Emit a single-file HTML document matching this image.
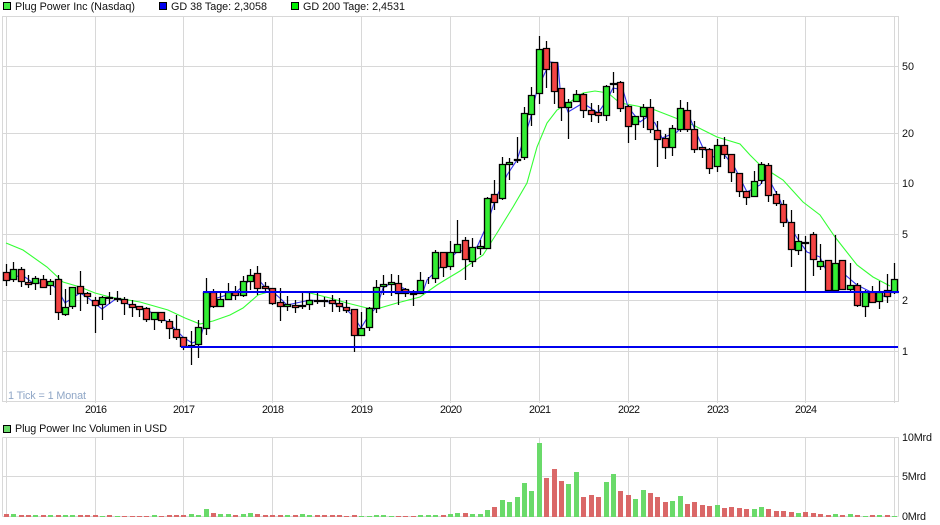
<!DOCTYPE html>
<html><head><meta charset="utf-8"><style>
html,body{margin:0;padding:0;background:#fff;width:940px;height:525px;overflow:hidden}
svg{display:block}
text{font-family:"Liberation Sans",sans-serif;font-size:10.8px;fill:#111}
</style></head><body>
<svg width="940" height="525" viewBox="0 0 940 525" xmlns="http://www.w3.org/2000/svg">
<rect width="940" height="525" fill="#fff"/>
<!-- grid -->
<path fill="none" stroke="#d8d8d8" stroke-width="1" d="M2.5 16.5H898.5V401.5H2.5ZM6.5 16.5V403M95.5 16.5V403M183.5 16.5V403M272.5 16.5V403M361.5 16.5V403M450.5 16.5V403M539.5 16.5V403M628.5 16.5V403M717.5 16.5V403M805.5 16.5V403M894.5 16.5V403M2.5 66.5H898.5M2.5 133.5H898.5M2.5 183.5H898.5M2.5 234.5H898.5M2.5 300.5H898.5M2.5 351.5H898.5"/>
<path fill="none" stroke="#d8d8d8" stroke-width="1" d="M2.5 437.5H898.5V516.5M2.5 516.5V437.5M6.5 437.5V516.5M95.5 437.5V516.5M183.5 437.5V516.5M272.5 437.5V516.5M361.5 437.5V516.5M450.5 437.5V516.5M539.5 437.5V516.5M628.5 437.5V516.5M717.5 437.5V516.5M805.5 437.5V516.5M894.5 437.5V516.5M2.5 476.5H898.5M2.5 516.5H898.5"/>
<!-- MA 200 -->
<polyline fill="none" stroke="#33ff33" stroke-width="1.1" points="6,243 23,250 47,267 63,282 80,287 95,293 110,297 140,302 168,310 185,318 200,324 213,321 230,315 243,308 258,295 268,292 297,292 310,293 330,298 347,303 367,308 380,308 397,303 420,297 437,285 445,280 460,271 483,255 497,233 513,207 527,183 537,147 547,123 557,110 570,102 583,93 595,91 608,93 620,103 637,106 655,110 673,117 693,125 703,130 717,137 740,144 750,155 760,165 772,173 783,180 803,202 820,215 835,237 857,265 873,277 890,286"/>
<!-- MA 38 -->
<polyline fill="none" stroke="#3333ee" stroke-width="1.1" points="6,275 25,277 33,283 50,283 58,290 65,303 80,293 87,297 102,309 117,298 133,307 147,310 168,322 183,337 192,343 200,340 208,310 217,298 227,295 235,293 250,280 257,278 265,287 273,292 282,300 287,305 310,300 330,302 345,308 354,317 361,328 369,315 377,307 383,288 391,283 403,288 413,293 423,292 427,280 435,272 457,252 477,247 487,225 495,200 507,175 517,160 530,120 537,90 550,62 558,63 560,88 568,112 583,103 598,113 607,100 613,88 623,90 628,107 640,122 647,117 655,123 662,138 677,132 690,118 695,130 703,148 713,157 723,153 735,168 747,192 760,185 768,173 772,185 780,200 788,222 797,238 807,252 820,257 825,268 843,273 857,285 873,293 887,297 893,290"/>
<!-- wicks -->
<path fill="none" stroke="#000" stroke-width="1.25" d="M6.5 264V286M13.5 262V282M21.5 267V287M28.5 275V288M35.5 276V290M43.5 275V288M50.5 279V295M58.5 275V320M65.5 289V316M72.5 287V309M80.5 271V311M87.5 292V304M95.5 297V333M102.5 296V320M109.5 292V304M117.5 291V302M124.5 297V315M132.5 300V317M139.5 306V317M146.5 307V322M154.5 312V330M161.5 312V323M169.5 319V339M176.5 315V340M183.5 337V350M191.5 331V365M198.5 320V358M206.5 278V335M213.5 289V308M220.5 292V307M228.5 283V300M235.5 286V300M243.5 276V297M250.5 269V290M257.5 266V295M265.5 282V291M272.5 288V305M280.5 288V321M287.5 296V311M295.5 300V313M302.5 292V309M309.5 293V310M317.5 292V304M324.5 297V307M332.5 295V312M339.5 298V312M346.5 300V313M354.5 309V352M361.5 312V335M369.5 307V331M376.5 280V313M383.5 275V295M391.5 274V296M398.5 275V305M405.5 288V297M413.5 290V306M420.5 272V294M428.5 277V284M435.5 250V283M443.5 252V277M450.5 241V270M457.5 220V253M465.5 237V280M472.5 238V267M480.5 240V255M487.5 197V248M494.5 180V210M502.5 157V200M509.5 158V180M517.5 137V163M524.5 107V160M531.5 87V126M539.5 36V104M546.5 41V88M554.5 62V104M561.5 88V121M568.5 99V139M576.5 90V101M583.5 93V118M591.5 103V122M598.5 105V123M606.5 85V121M613.5 72V93M620.5 81V112M628.5 105V143M635.5 116V140M643.5 104V128M650.5 99V133M657.5 121V167M665.5 134V159M672.5 125V156M680.5 100V132M687.5 102V132M694.5 121V153M702.5 147V158M709.5 148V174M717.5 139V172M724.5 137V159M731.5 154V182M739.5 173V197M746.5 191V205M754.5 171V196M761.5 162V184M768.5 163V202M776.5 191V206M783.5 200V227M791.5 210V267M798.5 234V255M805.5 236V292M813.5 232V276M820.5 244V270M828.5 260V290M835.5 235V290M842.5 260V290M850.5 263V293M857.5 283V307M865.5 290V317M872.5 286V303M879.5 281V309M887.5 274V303M894.5 263V294"/>
<!-- red bodies -->
<path fill="#f44444" stroke="#000" stroke-width="1.35" d="M3.5 272.5h6V280.5h-6zM18.5 269.5h6V281.5h-6zM25.5 282.5h6V284.5h-6zM40.5 279.5h6V287.5h-6zM55.5 279.5h6V312.5h-6zM77.5 286.5h6V293.5h-6zM84.5 293.5h6V296.5h-6zM92.5 300.5h6V305.5h-6zM106.5 297.5h6V298.5h-6zM114.5 298.5h6V299.5h-6zM121.5 299.5h6V303.5h-6zM129.5 304.5h6V307.5h-6zM136.5 306.5h6V309.5h-6zM143.5 308.5h6V319.5h-6zM158.5 312.5h6V320.5h-6zM166.5 321.5h6V328.5h-6zM173.5 329.5h6V337.5h-6zM180.5 337.5h6V346.5h-6zM188.5 345.5h6V346.5h-6zM210.5 292.5h6V306.5h-6zM232.5 292.5h6V295.5h-6zM254.5 273.5h6V288.5h-6zM262.5 286.5h6V288.5h-6zM269.5 288.5h6V303.5h-6zM277.5 302.5h6V306.5h-6zM292.5 305.5h6V307.5h-6zM299.5 305.5h6V306.5h-6zM314.5 300.5h6V301.5h-6zM321.5 300.5h6V301.5h-6zM329.5 300.5h6V303.5h-6zM336.5 303.5h6V306.5h-6zM343.5 307.5h6V310.5h-6zM351.5 309.5h6V335.5h-6zM395.5 283.5h6V293.5h-6zM402.5 289.5h6V293.5h-6zM410.5 293.5h6V294.5h-6zM440.5 252.5h6V267.5h-6zM462.5 240.5h6V259.5h-6zM491.5 194.5h6V202.5h-6zM514.5 159.5h6V160.5h-6zM543.5 48.5h6V69.5h-6zM551.5 62.5h6V91.5h-6zM558.5 88.5h6V107.5h-6zM580.5 94.5h6V110.5h-6zM588.5 110.5h6V114.5h-6zM595.5 112.5h6V115.5h-6zM610.5 83.5h6V84.5h-6zM617.5 82.5h6V108.5h-6zM625.5 106.5h6V126.5h-6zM647.5 107.5h6V129.5h-6zM654.5 130.5h6V139.5h-6zM662.5 138.5h6V147.5h-6zM684.5 110.5h6V129.5h-6zM691.5 129.5h6V149.5h-6zM699.5 147.5h6V149.5h-6zM706.5 149.5h6V168.5h-6zM721.5 145.5h6V154.5h-6zM728.5 154.5h6V172.5h-6zM736.5 173.5h6V191.5h-6zM743.5 191.5h6V197.5h-6zM765.5 165.5h6V195.5h-6zM773.5 194.5h6V203.5h-6zM780.5 204.5h6V222.5h-6zM788.5 222.5h6V249.5h-6zM802.5 242.5h6V243.5h-6zM810.5 234.5h6V259.5h-6zM825.5 260.5h6V290.5h-6zM839.5 260.5h6V289.5h-6zM854.5 285.5h6V305.5h-6zM869.5 292.5h6V302.5h-6zM884.5 290.5h6V296.5h-6z"/>
<!-- green bodies -->
<path fill="#33ee33" stroke="#000" stroke-width="1.35" d="M10.5 269.5h6V279.5h-6zM32.5 278.5h6V283.5h-6zM47.5 281.5h6V285.5h-6zM62.5 307.5h6V314.5h-6zM69.5 287.5h6V306.5h-6zM99.5 297.5h6V304.5h-6zM151.5 312.5h6V319.5h-6zM195.5 327.5h6V344.5h-6zM203.5 292.5h6V328.5h-6zM217.5 299.5h6V306.5h-6zM225.5 292.5h6V299.5h-6zM240.5 281.5h6V295.5h-6zM247.5 275.5h6V281.5h-6zM284.5 304.5h6V306.5h-6zM306.5 300.5h6V304.5h-6zM358.5 328.5h6V335.5h-6zM366.5 308.5h6V327.5h-6zM373.5 287.5h6V308.5h-6zM380.5 284.5h6V286.5h-6zM388.5 282.5h6V284.5h-6zM417.5 280.5h6V293.5h-6zM432.5 252.5h6V278.5h-6zM447.5 252.5h6V266.5h-6zM454.5 244.5h6V252.5h-6zM469.5 247.5h6V261.5h-6zM477.5 246.5h6V248.5h-6zM484.5 198.5h6V248.5h-6zM499.5 164.5h6V198.5h-6zM506.5 162.5h6V164.5h-6zM521.5 113.5h6V157.5h-6zM528.5 95.5h6V114.5h-6zM536.5 49.5h6V93.5h-6zM565.5 102.5h6V107.5h-6zM573.5 94.5h6V101.5h-6zM603.5 86.5h6V115.5h-6zM632.5 116.5h6V124.5h-6zM640.5 107.5h6V116.5h-6zM669.5 128.5h6V147.5h-6zM677.5 108.5h6V129.5h-6zM714.5 145.5h6V166.5h-6zM751.5 181.5h6V196.5h-6zM758.5 164.5h6V180.5h-6zM795.5 241.5h6V250.5h-6zM817.5 261.5h6V266.5h-6zM832.5 263.5h6V290.5h-6zM847.5 285.5h6V289.5h-6zM862.5 292.5h6V306.5h-6zM876.5 292.5h6V301.5h-6zM891.5 279.5h6V292.5h-6z"/>
<!-- horizontal support lines -->
<rect x="203" y="291" width="696" height="2" fill="#0000ee"/>
<rect x="181" y="346" width="717" height="2" fill="#0000ee"/>
<!-- volume bars -->
<path fill="none" stroke="#da6868" stroke-width="5" d="M6.5 517v-3M21.5 517v-2M28.5 517v-2M43.5 517v-2M58.5 517v-2M80.5 517v-2M87.5 517v-2M95.5 517v-2M109.5 517v-2M124.5 517v-1M132.5 517v-1M139.5 517v-1M146.5 517v-1M161.5 517v-1M169.5 517v-2M176.5 517v-2M183.5 517v-2M213.5 517v-4M235.5 517v-2M257.5 517v-3M265.5 517v-2M272.5 517v-2M280.5 517v-2M295.5 517v-2M317.5 517v-2M324.5 517v-2M332.5 517v-2M339.5 517v-2M346.5 517v-1M354.5 517v-2M398.5 517v-1M405.5 517v-1M413.5 517v-1M443.5 517v-2M465.5 517v-4M494.5 517v-10M546.5 517v-39M554.5 517v-48M561.5 517v-36M583.5 517v-20M591.5 517v-22M598.5 517v-20M620.5 517v-26M628.5 517v-22M650.5 517v-24M657.5 517v-20M665.5 517v-15M687.5 517v-13M694.5 517v-15M702.5 517v-12M709.5 517v-11M724.5 517v-9M731.5 517v-10M739.5 517v-9M746.5 517v-8M768.5 517v-8M776.5 517v-6M783.5 517v-6M791.5 517v-5M805.5 517v-5M813.5 517v-4M820.5 517v-3M828.5 517v-2M842.5 517v-2M857.5 517v-2M872.5 517v-2M887.5 517v-2"/>
<path fill="none" stroke="#6ada6a" stroke-width="5" d="M13.5 517v-3M35.5 517v-2M50.5 517v-2M65.5 517v-2M72.5 517v-2M102.5 517v-1M117.5 517v-1M154.5 517v-2M191.5 517v-3M198.5 517v-2M206.5 517v-8M220.5 517v-3M228.5 517v-3M243.5 517v-3M250.5 517v-4M287.5 517v-2M302.5 517v-3M309.5 517v-2M361.5 517v-1M369.5 517v-1M376.5 517v-2M383.5 517v-2M391.5 517v-1M420.5 517v-2M428.5 517v-2M435.5 517v-2M450.5 517v-3M457.5 517v-4M472.5 517v-3M480.5 517v-3M487.5 517v-7M502.5 517v-17M509.5 517v-15M517.5 517v-20M524.5 517v-34M531.5 517v-26M539.5 517v-74M568.5 517v-33M576.5 517v-45M606.5 517v-35M613.5 517v-43M635.5 517v-18M643.5 517v-27M672.5 517v-16M680.5 517v-21M717.5 517v-12M754.5 517v-8M761.5 517v-10M798.5 517v-4M835.5 517v-3M850.5 517v-3M865.5 517v-1M879.5 517v-2M894.5 517v-1"/>
<!-- legend -->
<rect x="3.5" y="2.5" width="7" height="7" fill="#44ee44" stroke="#000"/>
<text x="15" y="10" textLength="120">Plug Power Inc (Nasdaq)</text>
<rect x="159.5" y="2.5" width="7" height="7" fill="#0000ee" stroke="#000"/>
<text x="171" y="10" textLength="96">GD 38 Tage: 2,3058</text>
<rect x="291.5" y="2.5" width="7" height="7" fill="#00ee00" stroke="#000"/>
<text x="303" y="10" textLength="102">GD 200 Tage: 2,4531</text>
<rect x="3.5" y="425.5" width="7" height="7" fill="#6ada6a" stroke="#000"/>
<text x="15" y="432" textLength="152">Plug Power Inc Volumen in USD</text>
<!-- axes -->
<text x="902" y="70">50</text>
<text x="902" y="137">20</text>
<text x="902" y="187">10</text>
<text x="902" y="238">5</text>
<text x="902" y="304">2</text>
<text x="902" y="355">1</text>
<text x="902" y="441" textLength="30">10Mrd</text>
<text x="902" y="480" textLength="24">5Mrd</text>
<text x="902" y="520" textLength="24">0Mrd</text>
<text x="85" y="413" textLength="22">2016</text>
<text x="173" y="413" textLength="22">2017</text>
<text x="262" y="413" textLength="22">2018</text>
<text x="351" y="413" textLength="22">2019</text>
<text x="440" y="413" textLength="22">2020</text>
<text x="529" y="413" textLength="22">2021</text>
<text x="618" y="413" textLength="22">2022</text>
<text x="707" y="413" textLength="22">2023</text>
<text x="795" y="413" textLength="22">2024</text>
<text x="8" y="399" textLength="78" style="fill:#8fa6c6">1 Tick = 1 Monat</text>
</svg>
</body></html>
